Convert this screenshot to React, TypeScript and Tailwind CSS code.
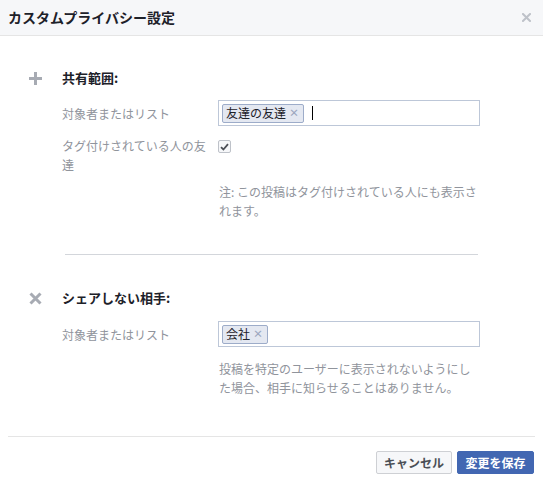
import React from "react";

const font = "font-['Noto_Sans_CJK_JP','Noto_Sans',sans-serif]";

function Token({ label }: { label: string }) {
  return (
    <span className="flex h-[19px] items-center gap-[3px] rounded-[2px] border border-[#9dacc9] bg-[#e4e8f1] pl-[3px] pr-[4px] text-[12px] leading-none text-[#1d2129]">
      {label}
      <span className="text-[10px] font-bold text-[#9aa6bd]">×</span>
    </span>
  );
}

function TokenInput({ label, cursor }: { label: string; cursor?: boolean }) {
  return (
    <div className="flex h-[26px] w-[262px] items-center gap-[8px] border border-[#bdc7d8] bg-white px-[3px]">
      <Token label={label} />
      {cursor && <span className="h-[14px] w-px bg-black" />}
    </div>
  );
}

function Row({
  label,
  children,
  top,
}: {
  label: React.ReactNode;
  children: React.ReactNode;
  top?: boolean;
}) {
  return (
    <div className={`flex ${top ? "items-start" : "items-center"}`}>
      <div className="w-[156px] pr-[10px] text-[12px] leading-[19px] text-[#90949c]">
        {label}
      </div>
      {children}
    </div>
  );
}

function Note({ children }: { children: React.ReactNode }) {
  return (
    <div className="ml-[156px] w-[262px] pl-[1px] text-[12px] leading-[19px] text-[#90949c]">
      {children}
    </div>
  );
}

function Section({
  icon,
  title,
  children,
}: {
  icon: React.ReactNode;
  title: string;
  children: React.ReactNode;
}) {
  return (
    <div className="flex pl-[29px]">
      <div className="flex h-5 w-[33px] items-center">{icon}</div>
      <div className="flex flex-col">
        <div className="h-5 text-[13px] font-bold leading-5 text-[#1d2129]">
          {title}
        </div>
        {children}
      </div>
    </div>
  );
}

export default function App() {
  return (
    <div className={`${font} h-[483px] w-[543px] bg-white`}>
      <div className="flex h-[36px] items-center justify-between border-b border-[#e5e5e5] bg-[#f6f7f9] pl-[8px] pr-[12px]">
        <span className="text-[14px] font-bold text-[#1d2129]">
          カスタムプライバシー設定
        </span>
        <svg width="9" height="9" viewBox="0 0 9 9">
          <path
            d="M1 1L8 8M8 1L1 8"
            stroke="#bec2c9"
            strokeWidth="2"
            strokeLinecap="square"
          />
        </svg>
      </div>

      <div className="pt-[32px]">
        <Section
          title="共有範囲:"
          icon={
            <svg width="13" height="13" viewBox="0 0 13 13">
              <path d="M6.5 0V13M0 6.5H13" stroke="#a7abb3" strokeWidth="3" />
            </svg>
          }
        >
          <div className="mt-[12px]">
            <Row label="対象者またはリスト">
              <TokenInput label="友達の友達" cursor />
            </Row>
          </div>
          <div className="mt-[10px]">
            <Row label="タグ付けされている人の友達" top>
              <span className="mt-[4px] flex h-[13px] w-[13px] items-center justify-center rounded-[2px] border border-[#bec2c9] bg-[#f6f7f9]">
                <svg width="9" height="8" viewBox="0 0 9 8">
                  <path
                    d="M1 4.2L3.4 6.5L8 1.2"
                    stroke="#4b4f56"
                    strokeWidth="1.8"
                    fill="none"
                  />
                </svg>
              </span>
            </Row>
          </div>
          <div className="mt-[8px]">
            <Note>注: この投稿はタグ付けされている人にも表示されます。</Note>
          </div>
        </Section>

        <div className="ml-[65px] mt-[34px] h-px w-[413px] bg-[#d3d6db]" />

        <div className="mt-[33px]">
          <Section
            title="シェアしない相手:"
            icon={
              <svg width="13" height="13" viewBox="0 0 13 13">
                <path
                  d="M1.5 1.5L11.5 11.5M11.5 1.5L1.5 11.5"
                  stroke="#a7abb3"
                  strokeWidth="3"
                />
              </svg>
            }
          >
            <div className="mt-[13px]">
              <Row label="対象者またはリスト">
                <TokenInput label="会社" />
              </Row>
            </div>
            <div className="mt-[12px]">
              <Note>
                投稿を特定のユーザーに表示されないようにした場合、相手に知らせることはありません。
              </Note>
            </div>
          </Section>
        </div>
      </div>

      <div className="mx-[8px] mt-[39px] h-px bg-[#e5e5e5]" />
      <div className="mt-[14px] flex justify-end gap-[5px] pr-[9px]">
        <button className="flex h-[23px] w-[76px] items-center justify-center rounded-[2px] border border-[#ced0d4] bg-[#f6f7f9] text-[12px] font-bold text-[#4b4f56]">
          キャンセル
        </button>
        <button className="flex h-[23px] w-[77px] items-center justify-center rounded-[2px] border border-[#4267b2] bg-[#4267b2] text-[12px] font-bold text-white">
          変更を保存
        </button>
      </div>
    </div>
  );
}
